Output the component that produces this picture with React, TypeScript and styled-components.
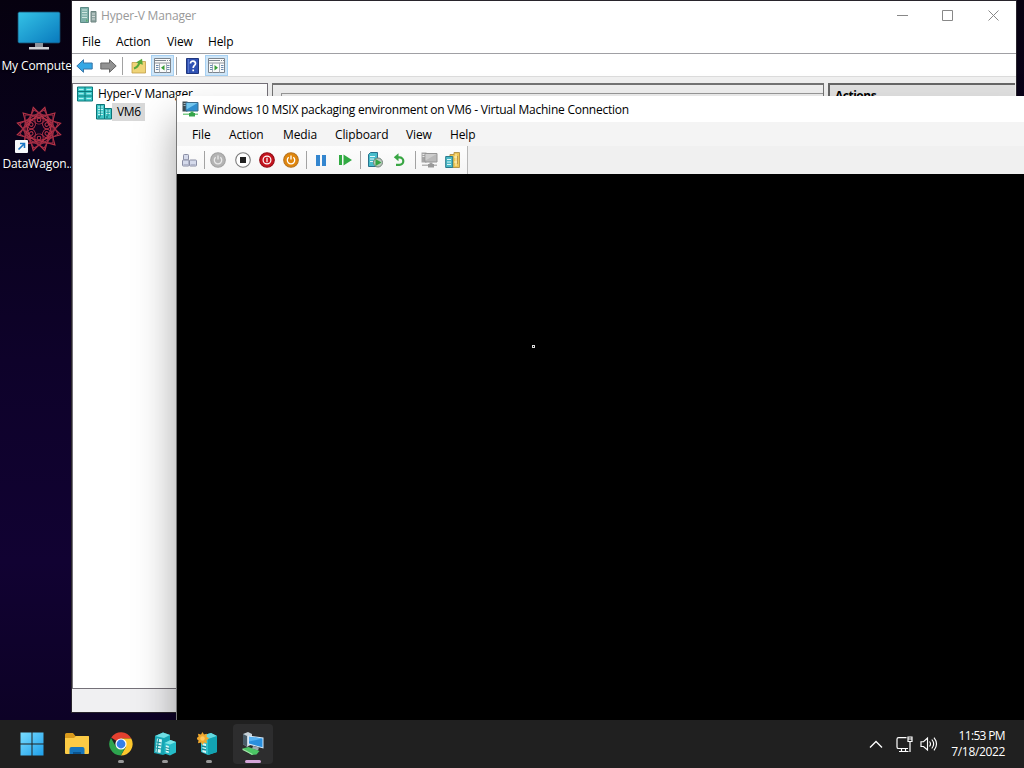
import React from "react";
import styled, { createGlobalStyle } from "styled-components";

const Global = createGlobalStyle`
  * { box-sizing: border-box; }
  html, body { margin: 0; padding: 0; overflow: hidden; }
  body { font-family: "Open Sans", "Noto Sans", sans-serif; font-size: 12px; }
  svg { display: block; flex: none; }
`;

const Screen = styled.div`
  width: 1024px;
  height: 768px;
  display: flex;
  flex-direction: column;
  overflow: hidden;
  background: #0d0226;
`;

const Desktop = styled.main`
  position: relative;
  flex: 1;
  overflow: hidden;
  background: linear-gradient(180deg, #06010f 0%, #09021c 22%, #0e022a 50%, #110232 78%, #0d0226 100%);
`;

const Shortcuts = styled.div`
  display: flex;
  flex-direction: column;
  width: 78px;
  padding-top: 10px;
  gap: 24px;
`;

const Shortcut = styled.div`
  display: flex;
  flex-direction: column;
  align-items: center;
  height: 72px;
`;

const ShortcutName = styled.span<{ $spacing: number }>`
  margin-top: auto;
  line-height: 16px;
  height: 24px;
  color: #fff;
  white-space: nowrap;
  letter-spacing: ${(p) => p.$spacing}px;
  text-shadow: 0 1px 2px #000;
`;

const ManagerWindow = styled.section`
  position: absolute;
  left: 72px;
  top: 1px;
  width: 944px;
  height: 711px;
  display: flex;
  flex-direction: column;
  background: #f0f0f0;
  box-shadow: 0 0 0 1px #28242c;
`;

const ConnectionWindow = styled.section`
  position: absolute;
  left: 176px;
  top: 96px;
  width: 860px;
  height: 640px;
  display: flex;
  flex-direction: column;
  background: #000;
  border-left: 1px solid #777;
  box-shadow: 0 24px 38px rgba(0, 0, 0, 0.36);
`;

const TitleBar = styled.header<{ $height: number; $left?: number; $inactive?: boolean }>`
  display: flex;
  align-items: center;
  height: ${(p) => p.$height}px;
  padding-left: ${(p) => p.$left ?? 0}px;
  flex: none;
  background: #fff;
  color: ${(p) => (p.$inactive ? "#999" : "#000")};
`;

const Caption = styled.span<{ $spacing: number; $gap: number }>`
  margin-left: ${(p) => p.$gap}px;
  white-space: nowrap;
  letter-spacing: ${(p) => p.$spacing}px;
`;

const WindowButtons = styled.div`
  display: flex;
  margin-left: auto;
`;

const WindowButton = styled.div`
  width: 45.5px;
  height: 28px;
  display: flex;
  align-items: center;
  justify-content: center;
`;

const MenuBar = styled.nav<{ $tone: string; $height: number; $left: number }>`
  display: flex;
  align-items: center;
  flex: none;
  height: ${(p) => p.$height}px;
  padding-left: ${(p) => p.$left}px;
  background: ${(p) => p.$tone};
`;

const MenuItem = styled.span<{ $width: number }>`
  width: ${(p) => p.$width}px;
  white-space: nowrap;
  letter-spacing: -0.12px;
`;

const ManagerTools = styled.div`
  display: flex;
  align-items: center;
  flex: none;
  height: 24px;
  padding: 1px 0 0 2px;
  border-top: 1px solid #a0a0a4;
  border-bottom: 1px solid #dcdcdc;
  background: #fff;
`;

const ToolSlot = styled.div<{ $width: number; $active?: boolean }>`
  width: ${(p) => p.$width}px;
  height: 21px;
  display: flex;
  align-items: center;
  justify-content: center;
  background: ${(p) => (p.$active ? "#cfe6f8" : "transparent")};
  border: 1px solid ${(p) => (p.$active ? "#a6d0f2" : "transparent")};
`;

const Rule = styled.i<{ $before?: number; $after?: number }>`
  width: 1px;
  flex: none;
  height: 18px;
  margin-left: ${(p) => p.$before ?? 0}px;
  margin-right: ${(p) => p.$after ?? 0}px;
  background: #a2a2a2;
`;

const Panes = styled.div`
  display: flex;
  flex: 1;
  gap: 4px;
  padding-top: 6px;
`;

const TreePane = styled.div`
  width: 196px;
  padding-top: 1px;
  background: #fff;
  border: 1px solid #747078;
  border-bottom: 0;
`;

const TreeRow = styled.div<{ $indent: number }>`
  display: flex;
  align-items: center;
  height: 18px;
  padding-left: ${(p) => p.$indent}px;
`;

const TreeName = styled.span<{ $selected?: boolean }>`
  height: 18px;
  line-height: 18px;
  padding: 0 4px 0 5px;
  white-space: nowrap;
  letter-spacing: ${(p) => (p.$selected ? -0.3 : -0.2)}px;
  background: ${(p) => (p.$selected ? "#d9d9d9" : "transparent")};
`;

const MiddlePane = styled.div`
  width: 552px;
  padding: 8px 0 0 8px;
  border: 1px solid #747474;
  border-top-width: 2px;
`;

const MiddleInner = styled.div`
  height: 100%;
  border-top: 1px solid #999;
  border-left: 1px solid #999;
`;

const ActionsPane = styled.div`
  width: 187px;
  height: 604px;
  padding: 2px 5px;
  background: #e2e2e2;
  border: 2px solid #666;
  border-right: 0;
  font-weight: 700;
  line-height: 18px;
  letter-spacing: -0.5px;
`;

const StatusBar = styled.footer`
  height: 24px;
  flex: none;
  background: #f0f0f2;
  border-top: 1px solid #747078;
`;

const ConnectionTools = styled.div`
  height: 28px;
  flex: none;
  display: flex;
  background: #f0f0f0;
`;

const ToolStrip = styled.div`
  width: 291px;
  height: 28px;
  display: flex;
  align-items: center;
  background: linear-gradient(#fdfdfd, #f5f5f5);
  border-right: 1px solid #b8b8b8;
`;

const Guest = styled.div`
  position: relative;
  flex: 1;
  background: #000;
`;

const Pointer = styled.i`
  position: absolute;
  left: 355px;
  top: 171px;
  width: 3px;
  height: 3px;
  border: 1px solid #ddd;
`;

const Taskbar = styled.footer`
  height: 48px;
  flex: none;
  display: flex;
  align-items: center;
  padding-left: 12px;
  background: #202020;
`;

const Task = styled.div<{ $active?: boolean; $gap?: number }>`
  width: 40px;
  height: 40px;
  margin-right: ${(p) => p.$gap ?? 4}px;
  flex: none;
  display: flex;
  flex-direction: column;
  align-items: center;
  justify-content: space-between;
  padding-top: 8px;
  border-radius: 4px;
  background: ${(p) => (p.$active ? "#2d2d2e" : "transparent")};
`;

const Marker = styled.i<{ $kind: "none" | "dot" | "active" }>`
  width: ${(p) => (p.$kind === "active" ? 16 : 6)}px;
  height: 3px;
  margin-bottom: 1px;
  border-radius: 2px;
  background: ${(p) => (p.$kind === "none" ? "transparent" : p.$kind === "active" ? "#d4a5d8" : "#999")};
`;

const Tray = styled.div`
  display: flex;
  align-items: center;
  margin-left: auto;
  padding-right: 19px;
`;

const TrayIcon = styled.div<{ $gap: number }>`
  margin-right: ${(p) => p.$gap}px;
`;

const Clock = styled.div`
  width: 55px;
  display: flex;
  flex-direction: column;
  align-items: flex-end;
  color: #fff;
  line-height: 16px;
  white-space: nowrap;
`;

const ClockLine = styled.span<{ $spacing: number }>`
  letter-spacing: ${(p) => p.$spacing}px;
`;

const ComputerIcon = () => (
  <svg width="44" height="42" viewBox="0 0 44 42">
    <defs>
      <linearGradient id="screen" x1="0" y1="0" x2="1" y2="1">
        <stop offset="0" stopColor="#35c3e6" />
        <stop offset="1" stopColor="#0879bd" />
      </linearGradient>
    </defs>
    <rect x="1" y="2" width="42" height="31" rx="1.5" fill="url(#screen)" stroke="#174b6c" strokeWidth=".8" />
    <path d="M18 33h8v4h-8z" fill="#8d929b" />
    <path d="M12 37h20v2.500H12z" fill="#cfd2d6" />
  </svg>
);

const RosetteIcon = () => (
  <svg width="48" height="50" viewBox="0 0 48 50">
    <g fill="none" stroke="#b83448" strokeWidth="1.100">
      {[0, 30, 60, 90].map((a) => (
        <path key={a} d="M24 .500L43.500 34.200H4.500z" transform={`rotate(${a + 15} 24 23)`} />
      ))}
      {[0, 30, 60].map((a) => (
        <rect key={a} x="10" y="9" width="28" height="28" stroke="#a02d44" transform={`rotate(${a} 24 23)`} />
      ))}
      {[0, 60, 120, 180, 240, 300].map((a) => (
        <g key={a} stroke="#b03048" transform={`rotate(${a} 24 23)`}>
          <circle cx="24" cy="14" r="4.200" />
          <circle cx="24" cy="14" r="1.800" />
        </g>
      ))}
    </g>
    <circle cx="24" cy="23" r="4.500" fill="#12031f" />
    <rect x="0" y="34" width="13" height="13" rx="1" fill="#f6f8fb" />
    <path d="M3.500 43.500l6-6M5 37.500h4.500V42" stroke="#1875c4" strokeWidth="1.600" fill="none" />
  </svg>
);

const ManagerIcon = () => (
  <svg width="17" height="17" viewBox="0 0 17 17">
    <path d="M.5.500h8v15h-8z" fill="#7fb0aa" stroke="#5c8b86" />
    <path d="M2 3h5M2 5.500h5M2 8h5M2 10.500h5" stroke="#d0e6e0" />
    <path d="M6 12.500h1.500v2H6z" fill="#5fae6a" />
    <path d="M11 4.500h5v10.500h-5z" fill="#8fa5a2" stroke="#6c8480" />
    <path d="M12 7h3M12 9.500h3M12 12h3" stroke="#d5dcda" />
  </svg>
);

const ServersIcon = () => (
  <svg width="16" height="16" viewBox="0 0 16 16">
    <g stroke="#0c7377" fill="#3fc6c6">
      <path d="M.5.500h8v14.500h-8z" />
      <path d="M8.500 4.500h7V15h-7z" />
    </g>
    <path d="M2 3h5M2 5.500h5M2 8h5M2 10.500h5M10 7h4M10 9.500h4" stroke="#c9f6f5" />
    <path d="M4.500 1v11.500M12 5v7" stroke="#0c7377" strokeWidth=".7" />
    <path d="M2 13h2M10 13h2" stroke="#0c6b6f" />
  </svg>
);

const RackIcon = () => (
  <svg width="16" height="16" viewBox="0 0 16 16">
    <path d="M.5 1h15v14H.5z" fill="#3ecaca" stroke="#0b787b" />
    <path d="M8 1v14M1 5.500h14M1 10h14" stroke="#0b787b" />
    <path d="M2 3.500h4.500M9.500 3.500H14M2 7.700h4.500M9.500 7.700H14M2 12.500h4.500M9.500 12.500H14" stroke="#b5f2f2" />
  </svg>
);

const ArrowIcon = ({ forward = false }: { forward?: boolean }) => (
  <svg width="17" height="16" viewBox="0 0 17 16">
    <path
      d="M.8 8L7.500 1.700V5h8.700v6H7.500v3.300z"
      transform={forward ? "translate(17 0) scale(-1 1)" : undefined}
      fill={forward ? "#929292" : "#35a8e5"}
      stroke={forward ? "#666" : "#3a76a8"}
    />
  </svg>
);

const FolderUpIcon = () => (
  <svg width="16" height="16" viewBox="0 0 16 16">
    <path d="M1 4.500V15h13.500V3.500H8l-1.500 1z" fill="#efd478" stroke="#c09c48" strokeWidth=".8" />
    <path d="M3 10.500C5.500 9.800 7.500 7.500 8.500 4.500" stroke="#55a83a" strokeWidth="2.200" fill="none" />
    <path d="M5 4.500L11 .8l.8 6z" fill="#55a83a" />
  </svg>
);

const PaneIcon = ({ right = false }: { right?: boolean }) => (
  <svg width="17" height="15" viewBox="0 0 17 15">
    <path d="M.5.500h16v14H.5z" fill="#fafafa" stroke="#7c848d" />
    <path d="M1 2.500h15" stroke="#7c848d" strokeDasharray="11 1 1 1" />
    <path d="M1 5h15" stroke="#8c949d" />
    <path d={right ? "M11.500 5v9.500M4.500 5v9.500" : "M5.500 5v9.500M12.500 5v9.500"} stroke="#a8b0b8" />
    <path d="M2 7.500h2.500M2 9.500h2.500M2 11.500h2.500M13 7.500h2.500M13 9.500h2.500M13 11.500h2.500" stroke="#6a8bb0" />
    <path d={right ? "M6.500 7l3.500 2.700-3.500 2.800z" : "M10.500 7L7 9.700l3.500 2.800z"} fill="#369d37" />
  </svg>
);

const HelpIcon = () => (
  <svg width="13" height="16" viewBox="0 0 13 16">
    <path d="M.5.500h12v15H.5z" fill="#3052b4" stroke="#20377e" />
    <path d="M2.500 1v14" stroke="#5676cc" />
    <path d="M4.500 5.500c0-3.500 5-3 5 0 0 2-2.300 2-2.300 4.500M7.200 11.500v1.800" stroke="#fff" strokeWidth="1.700" fill="none" />
  </svg>
);

const VmScreenIcon = ({ gray = false }: { gray?: boolean }) => (
  <svg width="17" height="16" viewBox="0 0 17 16">
    <path d="M.5.500h5v10h-5z" fill={gray ? "#a6a6a6" : "#3c4a50"} />
    <path d="M1.500 2.500h3M1.500 4.500h3" stroke={gray ? "#e8e8e8" : "#9fb4bd"} />
    <path d="M4 1.500h12V10H4z" fill={gray ? "#b9b9b9" : "#2f8fd0"} stroke={gray ? "#969696" : "#3b6a88"} />
    <path d="M4.500 2h11L4.500 8.500z" fill={gray ? "#cdcdcd" : "#72c6ee"} />
    <path d="M8.500 10.500h3V13h-3z" fill={gray ? "#a0a0a0" : "#3fae52"} />
    <path d="M1 12.500h15V14H1z" fill={gray ? "#b5b5b5" : "#7ccb86"} />
    <path d="M7 12h6v3.500H7z" fill={gray ? "#999" : "#35a44a"} />
  </svg>
);

const KeysIcon = () => (
  <svg width="15" height="13" viewBox="0 0 15 13">
    <g fill="#d5daeb" stroke="#8a8ea4">
      <rect x="1.500" y=".5" width="5" height="5.500" rx=".8" />
      <rect x=".5" y="6" width="6.500" height="6" rx=".8" />
      <rect x="7.500" y="6" width="7" height="6" rx=".8" />
    </g>
    <path d="M1.500 10.500H6M8.500 10.500h5" stroke="#b1b6cb" />
  </svg>
);

type PowerKind = "start" | "turnoff" | "shutdown" | "save";

const PowerIcon = ({ kind }: { kind: PowerKind }) => {
  const fill = { start: "#b4b4b4", turnoff: "#fff", shutdown: "#c5141e", save: "#e0860c" }[kind];
  const edge = { start: "#a2a2a2", turnoff: "#7c7c7c", shutdown: "#930d16", save: "#b87420" }[kind];
  return (
    <svg width="16" height="16" viewBox="0 0 16 16">
      <circle cx="8" cy="8" r="7.300" fill={fill} stroke={edge} strokeWidth="1.100" />
      {kind === "turnoff" && <path d="M5 5h6v6H5z" fill="#222" />}
      {kind === "shutdown" && (
        <g stroke="#fff" fill="none" strokeWidth="1.200">
          <circle cx="8" cy="8" r="3.900" />
          <path d="M8 5.800v4.400" />
        </g>
      )}
      {(kind === "start" || kind === "save") && (
        <path d="M5.700 5.300a3.700 3.700 0 1 0 4.600 0M8 3.500v4" stroke={kind === "start" ? "#e9e9e9" : "#fff"} strokeWidth="1.300" fill="none" />
      )}
    </svg>
  );
};

const PauseIcon = () => (
  <svg width="10" height="11" viewBox="0 0 10 11">
    <path d="M0 0h4v11H0zM6 0h4v11H6z" fill="#3486cf" />
  </svg>
);

const ResetIcon = () => (
  <svg width="13" height="12" viewBox="0 0 13 12">
    <path d="M0 1h3v10H0zM4.500.500L13 6l-8.500 5.500z" fill="#31aa42" />
  </svg>
);

const CheckpointIcon = () => (
  <svg width="16" height="16" viewBox="0 0 16 16">
    <path d="M1.500 2.500l2-2h7v13l-1 1h-8z" fill="#48bdcb" stroke="#28718d" />
    <path d="M3 4.500h5M3 7h4M3 9.500h3" stroke="#dff7fa" />
    <circle cx="11" cy="10.500" r="4.500" fill="#b9c9bb" stroke="#74827a" />
    <path d="M8.500 7l6 3.500-6 3.500z" fill="#35a443" />
  </svg>
);

const RevertIcon = () => (
  <svg width="12" height="14" viewBox="0 0 12 14">
    <path d="M4 4.300h2.500a3.800 3.800 0 0 1 0 7.600H3" fill="none" stroke="#39a644" strokeWidth="2.200" />
    <path d="M5.500.300v8L.8 4.300z" fill="#39a644" />
  </svg>
);

const ShareIcon = () => (
  <svg width="16" height="16" viewBox="0 0 16 16">
    <path d="M5 2.500h4v-2h5.500v15H5z" fill="#ecc452" stroke="#b8964c" />
    <path d="M.7 4.500h7v11h-7z" fill="#4ab9c6" stroke="#297a8d" />
    <path d="M2 7.500h4M2 10h4M2 12.500h4" stroke="#ddf7f9" />
    <path d="M11 2v12M9 5h4M9 10h4" stroke="#fff1ba" />
    <path d="M12.500 4v8" stroke="#c09a48" />
  </svg>
);

const StartIcon = () => (
  <svg width="24" height="24" viewBox="0 0 24 24">
    <defs>
      <linearGradient id="tiles" x1="0" y1="0" x2="1" y2="1">
        <stop offset="0" stopColor="#79dcff" />
        <stop offset="1" stopColor="#1e9fea" />
      </linearGradient>
    </defs>
    <path d="M.5.500h11v11H.5zM12.500.500h11v11h-11zM.5 12.500h11v11H.5zM12.500 12.500h11v11h-11z" fill="url(#tiles)" />
  </svg>
);

const ExplorerIcon = () => (
  <svg width="26" height="24" viewBox="0 0 26 24">
    <path d="M1 2.500Q1 1 2.500 1H9l2.500 3H24q1 0 1 1v5H1z" fill="#d99a1c" />
    <path d="M1 6h9L12 4h12q1 0 1 1v16q0 1-1 1H2q-1 0-1-1z" fill="#fccb45" />
    <path d="M5.500 22v-5q0-2 2-2h11q2 0 2 2v5z" fill="#1675bd" />
    <path d="M9 22v-2h8v2z" fill="#0b548f" />
  </svg>
);

const ChromeIcon = () => (
  <svg width="24" height="24" viewBox="0 0 24 24">
    <path d="M12 12L2.250 5.600A11.600 11.600 0 0 1 22.300 6.500H12z" fill="#e3402f" />
    <path d="M12 12l5 2.800-5.200 8.800A11.600 11.600 0 0 0 22.300 6.500H12z" fill="#fcc72c" />
    <path d="M12 12l-5 2.800L2 5.900a11.600 11.600 0 0 0 9.800 17.700l5-8.800z" fill="#2da44e" />
    <circle cx="12" cy="12" r="5.600" fill="#fff" />
    <circle cx="12" cy="12" r="4.400" fill="#347fe7" />
  </svg>
);

const HyperVTaskIcon = () => (
  <svg width="24" height="24" viewBox="0 0 24 24">
    <path d="M2 4l8-3.500L17 3v17l-7 3-9-2z" fill="#17a6b4" />
    <path d="M2 4l8-3.500L17 3l-6 3z" fill="#6fdfe4" />
    <path d="M4 6.500l5 1-1.500 13.500-5-1z" fill="#d9f9f8" />
    <path d="M3.500 10l5 1M3.200 13l5 1M3 16l5 1M5.500 7l-1.500 13.500" stroke="#15929c" strokeWidth="1.200" />
    <path d="M11.500 11l6-3 5.500 2v10.500l-6 3-5.500-2z" fill="#25bcc8" />
    <path d="M11.500 11l6-3 5.500 2-6 2.500z" fill="#78e6e7" />
    <path d="M12.800 13.300l3 .8v7l-3-.8z" fill="#daf8f7" />
    <path d="M12.500 15.500l4 1M12.500 18l4 1" stroke="#16858f" />
  </svg>
);

const ServerStarIcon = () => (
  <svg width="24" height="24" viewBox="0 0 24 24">
    <path d="M4 4l10-3 6 3v16l-9 3-7-3z" fill="#2fbecb" />
    <path d="M4 4l10-3 6 3-8 3z" fill="#64d9df" />
    <path d="M11 7l9-3v16l-9 3z" fill="#12a3b2" />
    <path d="M5.500 11l3.500 1v9l-3.500-1z" fill="#d9f6f6" />
    <path d="M5 14l4 1M5 17l4 1" stroke="#128696" strokeWidth="1.500" />
    <path d="M5.500 0L7 2.500l3-.7-.5 3L12 6.500 9.500 8.200l.5 3-3-.7L5.500 13 4 10.500l-3 .7.500-3L-1 6.500l2.500-1.700-.5-3 3 .7z" fill="#f0a82d" />
    <circle cx="5.500" cy="6.500" r="2.200" fill="#ffc860" />
  </svg>
);

const VmTaskIcon = () => (
  <svg width="24" height="24" viewBox="0 0 24 24">
    <path d="M2 2l5-2 4 2v10l-5 3-4-3z" fill="#c5d0d7" />
    <path d="M2 2l4 2v11l-4-3z" fill="#485b67" />
    <path d="M7 3.500L22.500 5.500v11L7 12.500z" fill="#d6eafa" />
    <path d="M8 4.700l13.500 1.800v8.800L8 11.600z" fill="#2a8fdd" />
    <path d="M8 4.700l13.500 1.800L8 9.500z" fill="#57b2f2" />
    <path d="M12 14l6 1.500-1 3-6-1.500z" fill="#9eabb1" />
    <path d="M1.500 16.500l6-1.500 11 4-3 3.500-5 .5z" fill="#4cc565" />
    <path d="M1.500 16.500l10 5.500v1L1.500 18z" fill="#a5e6aa" />
  </svg>
);

const ChevronUp = () => (
  <svg width="14" height="9" viewBox="0 0 14 9">
    <path d="M1 7.500l6-6 6 6" stroke="#fff" strokeWidth="1.300" fill="none" />
  </svg>
);

const NetworkIcon = () => (
  <svg width="17" height="17" viewBox="0 0 17 17">
    <path
      d="M10.500 1.600H2.600Q1 1.600 1 3.200v7.700q0 1.600 1.600 1.600H12M5.500 12.500v3M3 15.500h9.500M9.500 12.500v3M12 1h4v4.500h-4zM12 3h4M14 5.500v10.500"
      stroke="#fff"
      strokeWidth="1.200"
      fill="none"
    />
  </svg>
);

const VolumeIcon = () => (
  <svg width="18" height="16" viewBox="0 0 18 16">
    <path d="M1 5.700h2.500L7.500 2v12L3.500 10.500H1zM9.500 5.500q2 2.500 0 5M11.800 3.500q3.700 4.500 0 9M14 1.700q5 6.300 0 12.600" stroke="#fff" strokeWidth="1.150" fill="none" />
  </svg>
);

export default function App() {
  return (
    <Screen>
      <Global />
      <Desktop>
        <Shortcuts>
          <Shortcut>
            <ComputerIcon />
            <ShortcutName $spacing={-0.12}>My Computer</ShortcutName>
          </Shortcut>
          <Shortcut>
            <RosetteIcon />
            <ShortcutName $spacing={-0.12}>DataWagon...</ShortcutName>
          </Shortcut>
        </Shortcuts>

        <ManagerWindow>
          <TitleBar $height={29} $left={4} $inactive>
            <ToolSlot $width={24}><ManagerIcon /></ToolSlot>
            <Caption $spacing={-0.17} $gap={1}>Hyper-V Manager</Caption>
            <WindowButtons>
              <WindowButton><svg width="11" height="11"><path d="M0 5.500h11" stroke="#888" /></svg></WindowButton>
              <WindowButton><svg width="11" height="11"><path d="M.5.500h10v10H.5z" stroke="#888" fill="none" /></svg></WindowButton>
              <WindowButton><svg width="11" height="11"><path d="M.5.500l10 10M10.500.500l-10 10" stroke="#888" /></svg></WindowButton>
            </WindowButtons>
          </TitleBar>
          <MenuBar $tone="#fff" $height={23} $left={10}>
            <MenuItem $width={34}>File</MenuItem>
            <MenuItem $width={51}>Action</MenuItem>
            <MenuItem $width={41}>View</MenuItem>
            <MenuItem $width={40}>Help</MenuItem>
          </MenuBar>
          <ManagerTools>
            <ToolSlot $width={21}><ArrowIcon /></ToolSlot>
            <ToolSlot $width={26}><ArrowIcon forward /></ToolSlot>
            <Rule $before={1} $after={4} />
            <ToolSlot $width={24}><FolderUpIcon /></ToolSlot>
            <ToolSlot $width={23} $active><PaneIcon /></ToolSlot>
            <Rule $before={2} $after={3} />
            <ToolSlot $width={25}><HelpIcon /></ToolSlot>
            <ToolSlot $width={23} $active><PaneIcon right /></ToolSlot>
          </ManagerTools>
          <Panes>
            <TreePane>
              <TreeRow $indent={4}><RackIcon /><TreeName>Hyper-V Manager</TreeName></TreeRow>
              <TreeRow $indent={23}><ServersIcon /><TreeName $selected>VM6</TreeName></TreeRow>
            </TreePane>
            <MiddlePane><MiddleInner /></MiddlePane>
            <ActionsPane>Actions</ActionsPane>
          </Panes>
          <StatusBar />
        </ManagerWindow>

        <ConnectionWindow>
          <TitleBar $height={26}>
            <ToolSlot $width={26}><VmScreenIcon /></ToolSlot>
            <Caption $spacing={-0.235} $gap={0}>Windows 10 MSIX packaging environment on VM6 - Virtual Machine Connection</Caption>
          </TitleBar>
          <MenuBar $tone="#f4f4f4" $height={24} $left={15}>
            <MenuItem $width={37}>File</MenuItem>
            <MenuItem $width={54}>Action</MenuItem>
            <MenuItem $width={52}>Media</MenuItem>
            <MenuItem $width={71}>Clipboard</MenuItem>
            <MenuItem $width={44}>View</MenuItem>
            <MenuItem $width={40}>Help</MenuItem>
          </MenuBar>
          <ConnectionTools>
            <ToolStrip>
              <ToolSlot $width={25}><KeysIcon /></ToolSlot>
              <Rule $before={2} $after={1} />
              <ToolSlot $width={24}><PowerIcon kind="start" /></ToolSlot>
              <ToolSlot $width={25}><PowerIcon kind="turnoff" /></ToolSlot>
              <ToolSlot $width={23}><PowerIcon kind="shutdown" /></ToolSlot>
              <ToolSlot $width={25}><PowerIcon kind="save" /></ToolSlot>
              <Rule $before={3} $after={2} />
              <ToolSlot $width={24}><PauseIcon /></ToolSlot>
              <ToolSlot $width={24}><ResetIcon /></ToolSlot>
              <Rule $before={3} $after={2} />
              <ToolSlot $width={24}><CheckpointIcon /></ToolSlot>
              <ToolSlot $width={24}><RevertIcon /></ToolSlot>
              <Rule $before={4} $after={1} />
              <ToolSlot $width={24}><VmScreenIcon gray /></ToolSlot>
              <ToolSlot $width={23}><ShareIcon /></ToolSlot>
            </ToolStrip>
          </ConnectionTools>
          <Guest><Pointer /></Guest>
        </ConnectionWindow>
      </Desktop>

      <Taskbar>
        <Task $gap={5}><StartIcon /><Marker $kind="none" /></Task>
        <Task><ExplorerIcon /><Marker $kind="none" /></Task>
        <Task><ChromeIcon /><Marker $kind="dot" /></Task>
        <Task><HyperVTaskIcon /><Marker $kind="dot" /></Task>
        <Task><ServerStarIcon /><Marker $kind="dot" /></Task>
        <Task $active><VmTaskIcon /><Marker $kind="active" /></Task>
        <Tray>
          <TrayIcon $gap={13}><ChevronUp /></TrayIcon>
          <TrayIcon $gap={7}><NetworkIcon /></TrayIcon>
          <TrayIcon $gap={12}><VolumeIcon /></TrayIcon>
          <Clock>
            <ClockLine $spacing={-0.65}>11:53 PM</ClockLine>
            <ClockLine $spacing={-0.35}>7/18/2022</ClockLine>
          </Clock>
        </Tray>
      </Taskbar>
    </Screen>
  );
}
